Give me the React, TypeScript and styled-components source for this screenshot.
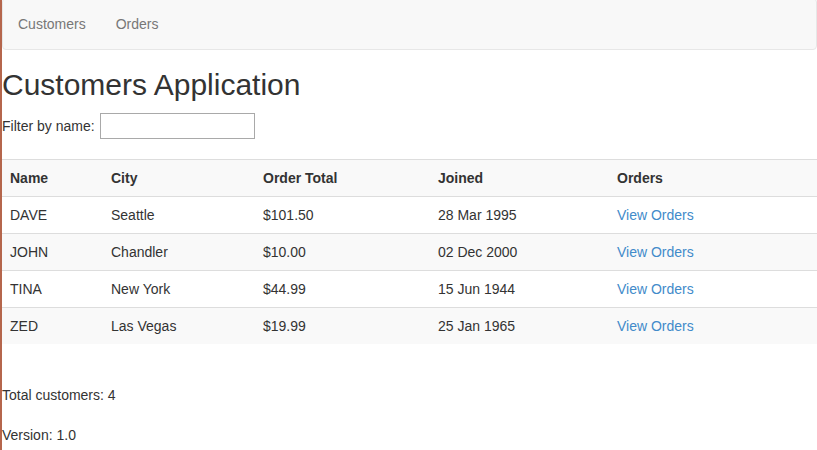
import React, { useState } from "react";
import styled, { createGlobalStyle } from "styled-components";

const GlobalStyle = createGlobalStyle`
  html, body {
    margin: 0;
    padding: 0;
    background: #ffffff;
  }
  body {
    font-family: "Liberation Sans", Arial, Helvetica, sans-serif;
    font-size: 14px;
    line-height: 20px;
    color: #333333;
    overflow: hidden;
  }
  * { box-sizing: border-box; }
`;

const Page = styled.div`
  min-height: 450px;
  border-left: 2px solid #b5664c;
  overflow: hidden;
`;

const Navbar = styled.nav`
  margin-top: -2px;
  height: 52px;
  display: flex;
  align-items: stretch;
  background: #f8f8f8;
  border: 1px solid #e7e7e7;
  border-radius: 4px;
`;

const NavLink = styled.a`
  display: block;
  padding: 15px;
  line-height: 20px;
  color: #777777;
  text-decoration: none;
  cursor: pointer;
`;

const Title = styled.h2`
  margin: 18px 0 12px;
  font-size: 30px;
  line-height: 33px;
  font-weight: 500;
  color: #333333;
`;

const FilterRow = styled.div`
  display: flex;
  align-items: center;
  gap: 5px;
  height: 26px;
`;

const FilterInput = styled.input`
  width: 155px;
  height: 26px;
  margin: 0;
  padding: 2px 4px;
  border: 1px solid #a9a9a9;
  font-family: "Liberation Sans", Arial, sans-serif;
  font-size: 13px;
  outline: none;
`;

const Table = styled.table`
  margin-top: 20px;
  width: 815px;
  table-layout: fixed;
  border-collapse: collapse;
  border-spacing: 0;
`;

const Row = styled.tr<{ $shaded?: boolean }>`
  background: ${(p) => (p.$shaded ? "#f9f9f9" : "#ffffff")};
`;

const HeadCell = styled.th<{ $w: number }>`
  width: ${(p) => p.$w}px;
  text-align: left;
  font-weight: bold;
  padding: 8px;
  line-height: 20px;
  border-top: 1px solid #dddddd;
`;

const Cell = styled.td`
  padding: 8px;
  line-height: 20px;
  border-top: 1px solid #dddddd;
  white-space: nowrap;
`;

const OrdersLink = styled.a`
  color: #428bca;
  text-decoration: none;
  cursor: pointer;
`;

const Footer = styled.div`
  margin-top: 41px;
`;

const Para = styled.p`
  margin: 0 0 20px;
`;

const customers = [
  { name: "DAVE", city: "Seattle", total: "$101.50", joined: "28 Mar 1995" },
  { name: "JOHN", city: "Chandler", total: "$10.00", joined: "02 Dec 2000" },
  { name: "TINA", city: "New York", total: "$44.99", joined: "15 Jun 1944" },
  { name: "ZED", city: "Las Vegas", total: "$19.99", joined: "25 Jan 1965" },
];

const columns = [
  { label: "Name", w: 101 },
  { label: "City", w: 152 },
  { label: "Order Total", w: 175 },
  { label: "Joined", w: 179 },
  { label: "Orders", w: 208 },
];

export default function App() {
  const [filter, setFilter] = useState("");
  const shown = customers.filter((c) =>
    c.name.toLowerCase().includes(filter.toLowerCase())
  );
  return (
    <Page>
      <GlobalStyle />
      <Navbar>
        <NavLink>Customers</NavLink>
        <NavLink>Orders</NavLink>
      </Navbar>
      <Title>Customers Application</Title>
      <FilterRow>
        <span>Filter by name:</span>
        <FilterInput value={filter} onChange={(e) => setFilter(e.target.value)} />
      </FilterRow>
      <Table>
        <tbody>
          <Row $shaded>
            {columns.map((c) => (
              <HeadCell key={c.label} $w={c.w}>
                {c.label}
              </HeadCell>
            ))}
          </Row>
          {shown.map((c, i) => (
            <Row key={c.name} $shaded={i % 2 === 1}>
              <Cell>{c.name}</Cell>
              <Cell>{c.city}</Cell>
              <Cell>{c.total}</Cell>
              <Cell>{c.joined}</Cell>
              <Cell>
                <OrdersLink>View Orders</OrdersLink>
              </Cell>
            </Row>
          ))}
        </tbody>
      </Table>
      <Footer>
        <Para>Total customers: {shown.length}</Para>
        <Para>Version: 1.0</Para>
      </Footer>
    </Page>
  );
}
